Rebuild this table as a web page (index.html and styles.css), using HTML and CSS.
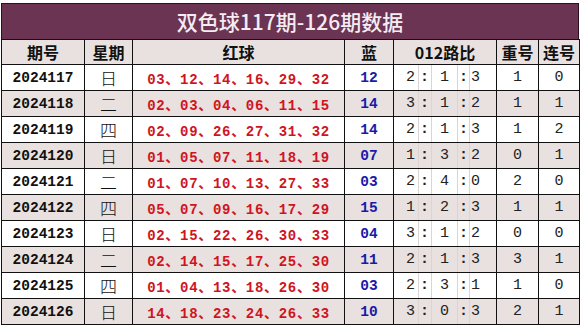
FILE: index.html
```html
<!DOCTYPE html>
<html lang="zh">
<head>
<meta charset="utf-8">
<link rel="stylesheet" href="styles.css">
</head>
<body>
<div class="sheet">
  <div class="title">双色球117期-126期数据</div>
  <table class="grid">
    <colgroup>
      <col class="c-issue"><col class="c-week"><col class="c-red"><col class="c-blue"><col class="c-ratio"><col class="c-rep"><col class="c-con">
    </colgroup>
    <thead>
      <tr class="head"><th>期号</th><th>星期</th><th>红球</th><th>蓝</th><th>012路比</th><th>重号</th><th>连号</th></tr>
    </thead>
    <tbody>
      <tr><td class="issue">2024117</td><td class="week">日</td><td class="red">03、12、14、16、29、32</td><td class="blue">12</td><td class="ratio"><div class="rat"><span class="r1">2</span><span class="r2">:</span><span class="r3">1</span><span class="r4">:</span><span class="r5">3</span></div></td><td class="num">1</td><td class="num">0</td></tr>
      <tr class="alt"><td class="issue">2024118</td><td class="week">二</td><td class="red">02、03、04、06、11、15</td><td class="blue">14</td><td class="ratio"><div class="rat"><span class="r1">3</span><span class="r2">:</span><span class="r3">1</span><span class="r4">:</span><span class="r5">2</span></div></td><td class="num">1</td><td class="num">1</td></tr>
      <tr><td class="issue">2024119</td><td class="week">四</td><td class="red">02、09、26、27、31、32</td><td class="blue">14</td><td class="ratio"><div class="rat"><span class="r1">2</span><span class="r2">:</span><span class="r3">1</span><span class="r4">:</span><span class="r5">3</span></div></td><td class="num">1</td><td class="num">2</td></tr>
      <tr class="alt"><td class="issue">2024120</td><td class="week">日</td><td class="red">01、05、07、11、18、19</td><td class="blue">07</td><td class="ratio"><div class="rat"><span class="r1">1</span><span class="r2">:</span><span class="r3">3</span><span class="r4">:</span><span class="r5">2</span></div></td><td class="num">0</td><td class="num">1</td></tr>
      <tr><td class="issue">2024121</td><td class="week">二</td><td class="red">01、07、10、13、27、33</td><td class="blue">03</td><td class="ratio"><div class="rat"><span class="r1">2</span><span class="r2">:</span><span class="r3">4</span><span class="r4">:</span><span class="r5">0</span></div></td><td class="num">2</td><td class="num">0</td></tr>
      <tr class="alt"><td class="issue">2024122</td><td class="week">四</td><td class="red">05、07、09、16、17、29</td><td class="blue">15</td><td class="ratio"><div class="rat"><span class="r1">1</span><span class="r2">:</span><span class="r3">2</span><span class="r4">:</span><span class="r5">3</span></div></td><td class="num">1</td><td class="num">1</td></tr>
      <tr><td class="issue">2024123</td><td class="week">日</td><td class="red">02、15、22、26、30、33</td><td class="blue">04</td><td class="ratio"><div class="rat"><span class="r1">3</span><span class="r2">:</span><span class="r3">1</span><span class="r4">:</span><span class="r5">2</span></div></td><td class="num">0</td><td class="num">0</td></tr>
      <tr class="alt"><td class="issue">2024124</td><td class="week">二</td><td class="red">02、14、15、17、25、30</td><td class="blue">11</td><td class="ratio"><div class="rat"><span class="r1">2</span><span class="r2">:</span><span class="r3">1</span><span class="r4">:</span><span class="r5">3</span></div></td><td class="num">3</td><td class="num">1</td></tr>
      <tr><td class="issue">2024125</td><td class="week">四</td><td class="red">01、04、13、18、26、30</td><td class="blue">03</td><td class="ratio"><div class="rat"><span class="r1">2</span><span class="r2">:</span><span class="r3">3</span><span class="r4">:</span><span class="r5">1</span></div></td><td class="num">1</td><td class="num">0</td></tr>
      <tr class="alt"><td class="issue">2024126</td><td class="week">日</td><td class="red">14、18、23、24、26、33</td><td class="blue">10</td><td class="ratio"><div class="rat"><span class="r1">3</span><span class="r2">:</span><span class="r3">0</span><span class="r4">:</span><span class="r5">3</span></div></td><td class="num">2</td><td class="num">1</td></tr>
    </tbody>
  </table>
</div>
</body>
</html>
```
FILE: styles.css
```css
html, body {
  margin: 0;
  padding: 0;
  background: #ffffff;
}
.sheet {
  padding: 3px 0 0 1px;
  width: 578px;
}
.title {
  box-sizing: border-box;
  width: 578px;
  height: 36px;
  background: #6a3452;
  border: 1px solid #2a1020;
  border-bottom: none;
  color: #f4ecf2;
  font-family: "Noto Sans CJK SC", sans-serif;
  font-weight: 500;
  font-size: 21px;
  line-height: 34px;
  text-align: center;
}
.grid {
  border-collapse: collapse;
  table-layout: fixed;
  width: 578px;
}
.c-issue { width: 83px; }
.c-week { width: 48px; }
.c-red { width: 212px; }
.c-blue { width: 49px; }
.c-ratio { width: 103px; }
.c-rep { width: 42px; }
.c-con { width: 41px; }
.grid th, .grid td {
  border: 1px solid #111111;
  padding: 0;
  height: 25px;
  text-align: center;
  vertical-align: middle;
  white-space: nowrap;
}
.grid th {
  height: 24px;
  background: #e8e1df;
  font-family: "Noto Sans CJK SC", sans-serif;
  font-weight: 700;
  font-size: 16px;
  color: #111111;
}
.alt td {
  background: #e8e1df;
}
.issue {
  font-family: "Liberation Mono", monospace;
  font-weight: 700;
  font-size: 14.5px;
  color: #111111;
}
.week {
  font-family: "Noto Sans CJK SC", sans-serif;
  font-weight: 300;
  font-size: 17px;
  color: #111111;
}
.red {
  font-family: "Liberation Mono", "Noto Sans CJK SC", monospace;
  font-weight: 700;
  font-size: 14px;
  letter-spacing: 0.7px;
  color: #d0141e;
}
.blue {
  font-family: "Liberation Mono", monospace;
  font-weight: 700;
  font-size: 14.5px;
  color: #1a1aa8;
}
.num {
  font-family: "Liberation Mono", monospace;
  font-size: 15px;
  color: #222222;
}
.grid td.ratio {
  padding: 0;
}
.rat {
  display: grid;
  grid-template-columns: 25px 13px 26px 12px 27px;
  height: 25px;
  font-family: "Liberation Mono", monospace;
  font-size: 15px;
  line-height: 25px;
  color: #222222;
}
.rat span {
  border-right: 1px solid #dcd4d3;
}
.rat span:last-child {
  border-right: none;
}
.r1 { text-align: right; padding-right: 3px; }
.r2 { text-align: left; padding-left: 1px; font-weight: 700; }
.r3 { text-align: center; }
.r4 { text-align: left; padding-left: 1px; font-weight: 700; }
.r5 { text-align: left; padding-left: 1px; }
```
